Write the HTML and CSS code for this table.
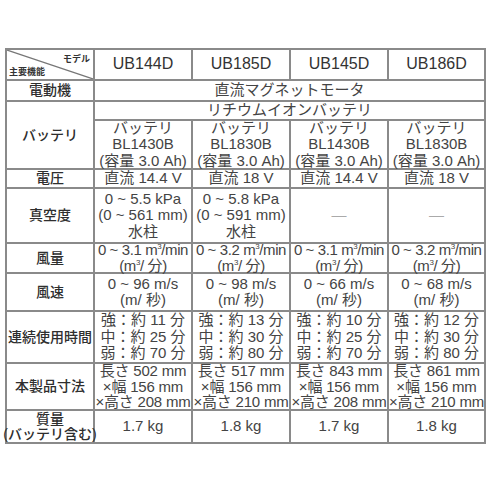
FILE: index.html
```html
<!DOCTYPE html>
<html lang="ja">
<head>
<meta charset="utf-8">
<link rel="stylesheet" href="styles.css">
</head>
<body>
<div class="spec">
  <div class="c diag">
    <svg class="diag-line" viewBox="0 0 100 100" preserveAspectRatio="none"><line x1="0" y1="0" x2="100" y2="100" stroke="#777" stroke-width="1.2" vector-effect="non-scaling-stroke"/></svg>
    <span class="d-model">モデル</span>
    <span class="d-func">主要機能</span>
  </div>
  <div class="c model"><span>UB144D</span></div>
  <div class="c model"><span>UB185D</span></div>
  <div class="c model"><span>UB145D</span></div>
  <div class="c model"><span>UB186D</span></div>

  <div class="c lbl"><span>電動機</span></div>
  <div class="c span4"><span>直流マグネットモータ</span></div>

  <div class="c lbl rs2"><span>バッテリ</span></div>
  <div class="c span4"><span>リチウムイオンバッテリ</span></div>
  <div class="c"><span>バッテリ<br>BL1430B<br>(容量 3.0 Ah)</span></div>
  <div class="c"><span>バッテリ<br>BL1830B<br>(容量 3.0 Ah)</span></div>
  <div class="c"><span>バッテリ<br>BL1430B<br>(容量 3.0 Ah)</span></div>
  <div class="c"><span>バッテリ<br>BL1830B<br>(容量 3.0 Ah)</span></div>

  <div class="c lbl"><span>電圧</span></div>
  <div class="c"><span>直流 14.4 V</span></div>
  <div class="c"><span>直流 18 V</span></div>
  <div class="c"><span>直流 14.4 V</span></div>
  <div class="c"><span>直流 18 V</span></div>

  <div class="c lbl"><span>真空度</span></div>
  <div class="c"><span>0 ~ 5.5 kPa<br>(0 ~ 561 mm)<br>水柱</span></div>
  <div class="c"><span>0 ~ 5.8 kPa<br>(0 ~ 591 mm)<br>水柱</span></div>
  <div class="c dash"><span>—</span></div>
  <div class="c dash"><span>—</span></div>

  <div class="c lbl"><span>風量</span></div>
  <div class="c tight"><span>0 ~ 3.1 m<sup>3</sup>/min<br>(m<sup>3</sup>/ 分)</span></div>
  <div class="c tight"><span>0 ~ 3.2 m<sup>3</sup>/min<br>(m<sup>3</sup>/ 分)</span></div>
  <div class="c tight"><span>0 ~ 3.1 m<sup>3</sup>/min<br>(m<sup>3</sup>/ 分)</span></div>
  <div class="c tight"><span>0 ~ 3.2 m<sup>3</sup>/min<br>(m<sup>3</sup>/ 分)</span></div>

  <div class="c lbl"><span>風速</span></div>
  <div class="c"><span>0 ~ 96 m/s<br>(m/ 秒)</span></div>
  <div class="c"><span>0 ~ 98 m/s<br>(m/ 秒)</span></div>
  <div class="c"><span>0 ~ 66 m/s<br>(m/ 秒)</span></div>
  <div class="c"><span>0 ~ 68 m/s<br>(m/ 秒)</span></div>

  <div class="c lbl"><span>連続使用時間</span></div>
  <div class="c"><span>強：約 11 分<br>中：約 25 分<br>弱：約 70 分</span></div>
  <div class="c"><span>強：約 13 分<br>中：約 30 分<br>弱：約 80 分</span></div>
  <div class="c"><span>強：約 10 分<br>中：約 25 分<br>弱：約 70 分</span></div>
  <div class="c"><span>強：約 12 分<br>中：約 30 分<br>弱：約 80 分</span></div>

  <div class="c lbl"><span>本製品寸法</span></div>
  <div class="c dim"><span>長さ 502 mm<br>×幅 156 mm<br>×高さ 208 mm</span></div>
  <div class="c dim"><span>長さ 517 mm<br>×幅 156 mm<br>×高さ 210 mm</span></div>
  <div class="c dim"><span>長さ 843 mm<br>×幅 156 mm<br>×高さ 208 mm</span></div>
  <div class="c dim"><span>長さ 861 mm<br>×幅 156 mm<br>×高さ 210 mm</span></div>

  <div class="c lbl lbl2"><span>質量<br>(バッテリ含む)</span></div>
  <div class="c"><span>1.7 kg</span></div>
  <div class="c"><span>1.8 kg</span></div>
  <div class="c"><span>1.7 kg</span></div>
  <div class="c"><span>1.8 kg</span></div>
</div>
</body>
</html>
```
FILE: styles.css
```css
html, body {
  margin: 0;
  padding: 0;
  background: #fff;
}
body {
  padding: 48px 0 0 5px;
  font-family: "Liberation Sans", "Noto Sans CJK JP", sans-serif;
  color: #444;
}
.spec {
  display: grid;
  grid-template-columns: 88px 98px 98px 98px 97px;
  grid-template-rows: 31px 21px 19px 49px 19px 55px 30px 38px 52px 47px 33px;
  width: 481px;
  box-sizing: border-box;
  border-top: 2px solid #8a8a8a;
  border-left: 2px solid #8a8a8a;
}
.c {
  box-sizing: border-box;
  border-right: 2px solid #8a8a8a;
  border-bottom: 2px solid #8a8a8a;
  display: flex;
  align-items: center;
  justify-content: center;
  text-align: center;
  font-size: 15px;
  line-height: 16.5px;
  white-space: nowrap;
}
.c sup {
  font-size: 8px;
  line-height: 0;
  vertical-align: 6px;
}
.tight {
  line-height: 16px;
  letter-spacing: -0.4px;
}
.dim {
  line-height: 15.5px;
  letter-spacing: -0.2px;
}
.model {
  font-size: 16px;
  color: #333;
}
.span4 {
  grid-column: span 4;
}
.rs2 {
  grid-row: span 2;
}
.lbl {
  font-weight: 500;
  font-size: 14px;
  color: #2e2e2e;
}
.lbl2 {
  line-height: 15px;
}
.dash {
  color: #aaa;
}
.diag {
  position: relative;
  display: block;
}
.diag-line {
  position: absolute;
  left: 0;
  top: 0;
  width: 100%;
  height: 100%;
}
.d-model {
  position: absolute;
  right: 3px;
  top: 4px;
  font-size: 9px;
  font-weight: 700;
  line-height: 10px;
  color: #333;
}
.d-func {
  position: absolute;
  left: 2px;
  bottom: 2px;
  font-size: 9px;
  font-weight: 700;
  line-height: 10px;
  color: #333;
}
```
